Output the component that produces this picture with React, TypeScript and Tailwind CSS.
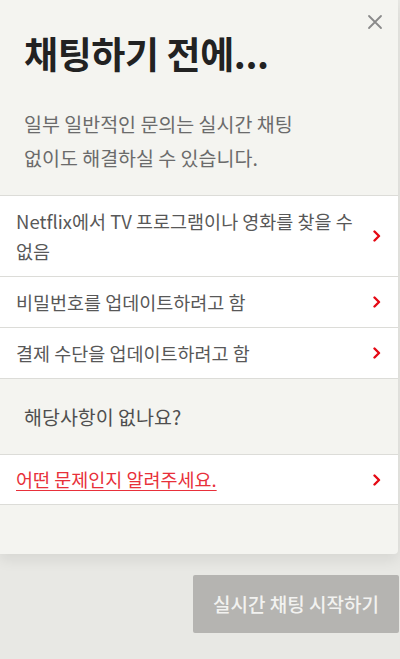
const FONT = { fontFamily: '"Noto Sans CJK KR", "Noto Sans", sans-serif' };

function Chevron() {
  return (
    <svg width="10" height="12" viewBox="0 0 10 12" fill="none" className="shrink-0">
      <path d="M2.5 1.5 L7 6 L2.5 10.5" stroke="#e50914" strokeWidth={2.4} strokeLinecap="round" strokeLinejoin="round" />
    </svg>
  );
}

const TOPICS = [
  'Netflix에서 TV 프로그램이나 영화를 찾을 수 없음',
  '비밀번호를 업데이트하려고 함',
  '결제 수단을 업데이트하려고 함',
];

export default function App() {
  return (
    <div className="w-[400px] h-[659px] bg-[#e8e8e4] overflow-hidden break-keep" style={FONT}>
      <div className="w-[398px] h-[554px] bg-[#f4f4f0] rounded-br-[4px] shadow-[0_6px_14px_rgba(0,0,0,0.08)] flex flex-col">
        {/* header */}
        <div className="relative px-6 pt-[31px]">
          <button className="absolute right-[15px] top-[14px] text-[#8a8a8a]">
            <svg width="16" height="16" viewBox="0 0 16 16" fill="none">
              <path d="M2 2 L14 14 M14 2 L2 14" stroke="currentColor" strokeWidth={1.8} strokeLinecap="round" />
            </svg>
          </button>
          <h1 className="text-[37px] leading-[44px] font-bold text-[#222] tracking-[-0.4px]">채팅하기 전에...</h1>
          <p className="mt-[32px] text-[19.5px] leading-[34px] text-[#6b6b6b]">
            일부 일반적인 문의는 실시간 채팅<br />없이도 해결하실 수 있습니다.
          </p>
        </div>

        {/* topics */}
        <div className="mt-[20px] border-b border-[#dcdcd8]">
          {TOPICS.map((t) => (
            <div key={t} className="flex items-center justify-between bg-white border-t border-[#dcdcd8] pl-4 pr-[16px] py-[10px]">
              <span className="text-[18.5px] leading-[30px] text-[#585858] pr-[12px]">{t}</span>
              <Chevron />
            </div>
          ))}
        </div>

        <div className="h-[75px] flex items-center px-6">
          <span className="text-[19.5px] text-[#4f4f4f]">해당사항이 없나요?</span>
        </div>

        <div className="flex items-center justify-between bg-white border-t border-b border-[#dcdcd8] pl-4 pr-[16px] h-[51px]">
          <span className="text-[18.5px] text-[#e8303a] underline underline-offset-[3px]">어떤 문제인지 알려주세요.</span>
          <Chevron />
        </div>
      </div>

      <div className="flex justify-end pt-[21px] pr-[1px]">
        <button className="w-[206px] h-[58px] bg-[#b5b4b1] rounded-[2px] text-[19px] text-[#f2f2f0] font-medium">
          실시간 채팅 시작하기
        </button>
      </div>
    </div>
  );
}
